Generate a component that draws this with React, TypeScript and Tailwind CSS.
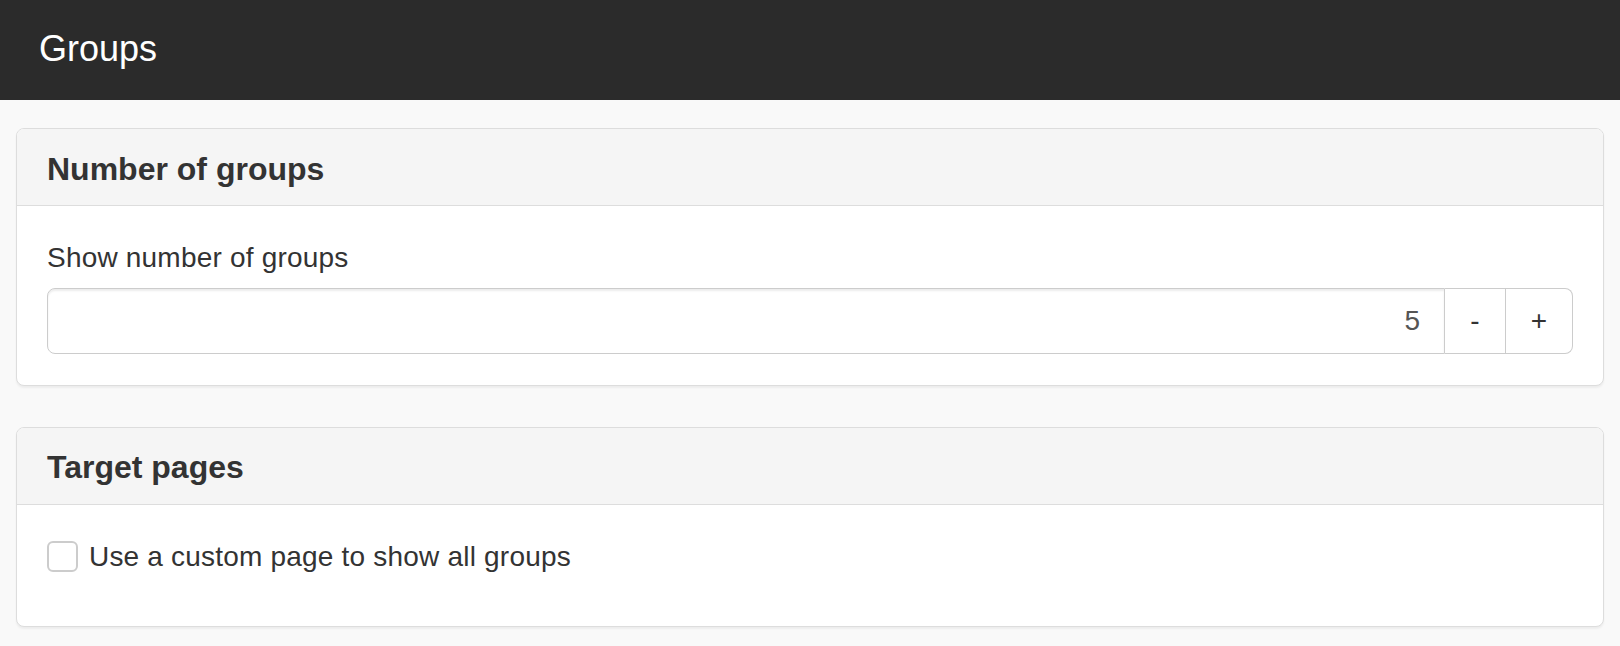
import { useState } from 'react';

export default function App() {
  const [count, setCount] = useState(5);
  const [custom, setCustom] = useState(false);

  return (
    <div className="min-h-screen bg-[#f9f9f9] text-[#333] font-['Liberation_Sans',Arial,sans-serif]">
      {/* Top bar */}
      <header className="h-[100px] bg-[#2b2b2b] flex items-center px-[39px] pb-[3px]">
        <h1 className="text-white text-[36px] leading-none">Groups</h1>
      </header>

      <main className="px-4 pt-[28px] pb-5 flex flex-col gap-[41px]">
        {/* Number of groups */}
        <section className="bg-white border border-[#ddd] rounded-[8px] shadow-[0_2px_2px_rgba(0,0,0,0.05)] overflow-hidden">
          <div className="h-[77px] bg-[#f5f5f5] border-b border-[#ddd] flex items-center px-[30px] pt-1">
            <h3 className="text-[32px] font-bold leading-none">Number of groups</h3>
          </div>
          <div className="px-[30px] pt-[32px] pb-[31px]">
            <label className="block text-[28px] leading-[40px] tracking-[0.2px] mb-[10px]">Show number of groups</label>
            <div className="flex h-[66px]">
              <input
                type="text"
                value={count}
                onChange={(e) => setCount(Number(e.target.value) || 0)}
                className="flex-1 min-w-0 border border-[#ccc] rounded-l-[8px] px-6 text-right text-[28px] text-[#555] outline-none shadow-[inset_0_2px_2px_rgba(0,0,0,0.075)] font-['Liberation_Sans',Arial,sans-serif]"
              />
              <button
                onClick={() => setCount((c) => c - 1)}
                className="w-[61px] border-y border-r border-[#ccc] bg-white text-[28px] text-[#333] flex items-center justify-center"
              >
                -
              </button>
              <button
                onClick={() => setCount((c) => c + 1)}
                className="w-[67px] border-y border-r border-[#ccc] rounded-r-[8px] bg-white text-[28px] text-[#333] flex items-center justify-center"
              >
                +
              </button>
            </div>
          </div>
        </section>

        {/* Target pages */}
        <section className="bg-white border border-[#ddd] rounded-[8px] shadow-[0_2px_2px_rgba(0,0,0,0.05)] overflow-hidden">
          <div className="h-[77px] bg-[#f5f5f5] border-b border-[#ddd] flex items-center px-[30px] pt-[2px]">
            <h3 className="text-[32px] font-bold leading-none">Target pages</h3>
          </div>
          <div className="px-[30px] pt-[32px] pb-[49px]">
            <label className="flex items-center gap-[11px] h-[40px] text-[28px] tracking-[0.2px] cursor-pointer">
              <span
                onClick={() => setCustom(!custom)}
                className="w-[31px] h-[31px] -mt-[2px] border-2 border-[#ccc] rounded-[6px] bg-white flex items-center justify-center"
              >
                {custom && (
                  <svg className="w-5 h-5" viewBox="0 0 24 24" fill="none" stroke="#333" strokeWidth="3">
                    <path d="M5 12l5 5 9-10" />
                  </svg>
                )}
              </span>
              <span onClick={() => setCustom(!custom)}>Use a custom page to show all groups</span>
            </label>
          </div>
        </section>
      </main>
    </div>
  );
}
